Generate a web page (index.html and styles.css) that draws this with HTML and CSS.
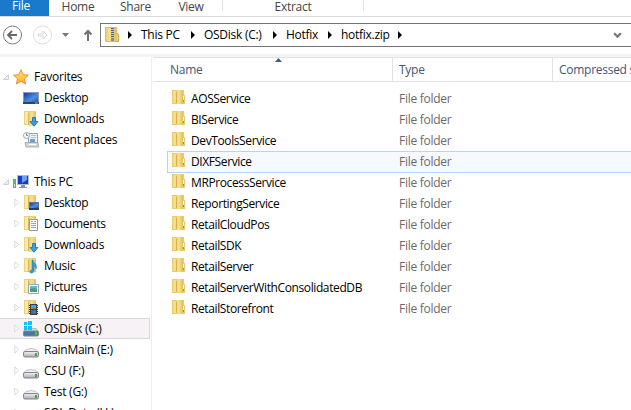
FILE: index.html
```
<!DOCTYPE html>
<html lang="en">
<head>
<meta charset="utf-8">
<title>hotfix.zip</title>
<link rel="stylesheet" href="styles.css">
</head>
<body>
<svg class="defs" aria-hidden="true">
  <defs>
    <linearGradient id="gold"><stop offset="0" stop-color="#e9cf73"/><stop offset=".4" stop-color="#f5e294"/><stop offset="1" stop-color="#e2be55"/></linearGradient>
    <linearGradient id="screen" x2="1" y2="1"><stop offset="0" stop-color="#153f9b"/><stop offset=".6" stop-color="#4d8fe2"/><stop offset="1" stop-color="#2455b5"/></linearGradient>
    <linearGradient id="metal" x2="0" y2="1"><stop offset="0" stop-color="#f5f5f7"/><stop offset="1" stop-color="#a9a8b1"/></linearGradient>
    <linearGradient id="starfill" x2="0" y2="1"><stop offset="0" stop-color="#ffe879"/><stop offset="1" stop-color="#ffad20"/></linearGradient>
    <symbol id="folder" viewBox="0 0 16 16">
      <path d="M1 1h12v14H1z" fill="#e8cb6c"/><path d="M2 2h3v12H2z" fill="#f3dd8b"/>
      <path d="M5 2l2-1h5v14H7l-2-1z" fill="url(#gold)"/><path d="M5 3h1v11H5z" fill="#d5b24b"/>
      <path d="M12 6h2v9h-2z" fill="#e6c973"/><path d="M12 7h1v5h-1z" fill="#fff"/><path d="M12 11h1v2h-1z" fill="#36a4d9"/>
    </symbol>
    <symbol id="base" viewBox="0 0 16 16">
      <path d="M1 0h12v14H1z" fill="#ecd17d"/><path d="M2 1h3v12H2z" fill="#f9eaaa"/>
      <path d="M6 2l2-1h5v13l-5 1.500-2-1z" fill="url(#gold)"/><path d="M5 2h1v12H5z" fill="#d8b75a"/>
    </symbol>
    <symbol id="down" viewBox="0 0 16 16">
      <use href="#base"/><path d="M9.500 6.500h3v4H15l-4 4.700-4-4.700h2.500z" fill="#35a1ed" stroke="#176cb5" stroke-width=".8"/>
    </symbol>
    <symbol id="desktop" viewBox="0 0 16 16">
      <path d="M0 2h16v12H0z" fill="#8d9cae"/><path d="M1 3h14v9H1z" fill="url(#screen)"/><path d="M0 12h16v2H0z" fill="#35445b"/><path d="M12 12.500h3v1h-3z" fill="#91b2ce"/>
    </symbol>
    <symbol id="deskfolder" viewBox="0 0 16 16">
      <use href="#base"/><path d="M6 7h10v8H6z" fill="#60758d"/><path d="M7 8h8v5H7z" fill="url(#screen)"/><path d="M6 13h10v2H6z" fill="#283d59"/>
    </symbol>
    <symbol id="docs" viewBox="0 0 16 16">
      <use href="#base"/><path d="M6.500 3.500h8v11h-8z" fill="#fff" stroke="#919ba7"/><path d="M8 5.500h2m1 0h2M8 7.500h5M8 9.500h5M8 11.500h5" fill="none" stroke="#8fa4bd"/>
    </symbol>
    <symbol id="music" viewBox="0 0 16 16">
      <use href="#base"/><path d="M10 2c0 3 5 4 3 9 0-3-2-3-2-3v5c-1 3-5 2-4 0 .5-1 2-1 2-1V2z" fill="#299de5" stroke="#1872b4" stroke-width=".5"/>
    </symbol>
    <symbol id="pics" viewBox="0 0 16 16">
      <use href="#base"/><path d="M5.500 5.500h10v9h-10z" fill="#fff" stroke="#9aa6ac"/><path d="M7 7h7v3H7z" fill="#65b3df"/><path d="M7 10l4-1 3 1v3H7z" fill="#4d9c74"/>
    </symbol>
    <symbol id="video" viewBox="0 0 16 16">
      <use href="#base"/><path d="M6 4h9v11H6z" fill="#363f48"/><path d="M8 5h5v4H8z" fill="#4aa4df"/><path d="M8 10h5v4H8z" fill="#326f9e"/><path d="M10 7l3 2H9zM9 12l3-1 1 2z" fill="#b66c30"/><path d="M6.500 4v11M14.500 4v11" fill="none" stroke="#ddd" stroke-dasharray="1 1"/>
    </symbol>
    <symbol id="drive" viewBox="0 0 16 16">
      <path d="M3 6.500q5-2 10 0l2 2v4H1v-4z" fill="#f0f0f2" stroke="#b8b7bc" stroke-width=".8"/><rect x=".5" y="8.500" width="15" height="5.500" rx="1.500" fill="url(#metal)" stroke="#85848c"/><path d="M12 10h2v3h-2z" fill="#42a637"/>
    </symbol>
    <symbol id="osdrive" viewBox="0 0 16 16">
      <path d="M3 7.500h10l2 3H1z" fill="#d7dce0" stroke="#9ba4ab" stroke-width=".7"/><rect x=".5" y="10" width="15" height="5" rx="1.200" fill="#427d96" stroke="#7b8b94"/><path d="M12 11h2v3h-2z" fill="#52c44a"/>
      <path d="M1 1h3v3H1zM5 0h4v4H5zM1 5h3v4H1zM5 5h4v4H5z" fill="#11c4f4"/>
    </symbol>
    <symbol id="pc" viewBox="0 0 16 16">
      <path d="M4 1h12v10H4z" fill="#b4b9c2"/><path d="M5 2h10v8H5z" fill="#173fbd"/><path d="M9 2h5v4l-5 3z" fill="#6ba1ee"/><path d="M8 11h4v2h2v1H6v-1h2z" fill="#8d949d"/><path d="M0 5h3v9H0z" fill="#8b9296"/><path d="M1 6h1v3H1z" fill="#45d645"/><path d="M1 10h1v3H1z" fill="#ddd"/>
    </symbol>
    <symbol id="recent" viewBox="0 0 16 16">
      <path d="M5.500 1.500h9v9h-9z" fill="#eef3f6" stroke="#9ba4aa"/><path d="M8 3.500h5M8 5.500h5" fill="none" stroke="#b5c0c8"/><path d="M7 7h5v3H7z" fill="#58a9d5"/><path d="M2 10.500h13l.5 4.500H3z" fill="#d4d8db" stroke="#969da3" stroke-width=".8"/><path d="M6 12.500h7" fill="none" stroke="#fff"/><circle cx="3.500" cy="3.500" r="3" fill="#f7f9fb" stroke="#9aa5ad"/><path d="M3.500 1.500v2H5" fill="none" stroke="#526675" stroke-width=".8"/>
    </symbol>
    <symbol id="star" viewBox="0 0 16 16"><path d="M8 .7l2.200 5 5.200.5-4 3.600 1.300 5.200L8 12.300 3.300 15l1.300-5.200-4-3.600 5.200-.5z" fill="url(#starfill)" stroke="#e88532" stroke-width=".9"/></symbol>
    <symbol id="zip" viewBox="0 0 16 16">
      <path d="M.5 .5h11v14H.5z" fill="url(#gold)" stroke="#dfbd58"/><path d="M11.500 6.500q3-1 2 8h-2" fill="#f2d679" stroke="#c59d40"/><path d="M7.500 1v10" fill="none" stroke="#b9c6d6" stroke-width="3"/><path d="M7.500 1v10" fill="none" stroke="#4b678e" stroke-width="3" stroke-dasharray="1 1"/><path d="M6 11h3v3H6z" fill="#8c8c8c"/>
    </symbol>
    <symbol id="closed" viewBox="0 0 6 9"><path d="M.8 1l4 3.500-4 3.500z" fill="#fff" stroke="#dcdcdc"/></symbol>
    <symbol id="open" viewBox="0 0 6 6"><path d="M.5 5.500h5v-5z" fill="#eee" stroke="#d0d0d0"/></symbol>
    <symbol id="crumb" viewBox="0 0 4 8"><path d="M0 0l4 4-4 4z" fill="#000"/></symbol>
  </defs>
</svg>
<nav class="tabs"><span class="file">File</span><span class="home">Home</span><span class="share">Share</span><span class="view">View</span><span class="extract">Extract</span></nav>
<div class="address">
  <svg class="nav" viewBox="0 0 100 36">
    <circle cx="12.500" cy="18" r="9" fill="none" stroke="#7c7c7c"/><path d="M17 18H8.500M12 14l-4 4 4 4" fill="none" stroke="#686868" stroke-width="1.800"/>
    <circle cx="42.500" cy="18" r="9" fill="none" stroke="#ddd"/><path d="M38 17h5v-3l4 4-4 4v-3h-5z" fill="none" stroke="#d4d4d4"/>
    <path d="M62 16h7l-3.500 4z" fill="#777"/><path d="M88 24V14M84.500 17.500L88 14l3.500 3.500" fill="none" stroke="#707070" stroke-width="2"/>
  </svg>
  <div class="path">
    <svg class="zip"><use href="#zip"/></svg><svg class="crumb"><use href="#crumb"/></svg><span class="c1">This PC</span><svg class="crumb"><use href="#crumb"/></svg><span class="c2">OSDisk (C:)</span><svg class="crumb"><use href="#crumb"/></svg><span class="c3">Hotfix</span><svg class="crumb"><use href="#crumb"/></svg><span class="c4">hotfix.zip</span><svg class="crumb"><use href="#crumb"/></svg>
    <svg class="drop" viewBox="0 0 8 6"><path d="M1 1l3 3 3-3" fill="none" stroke="#777" stroke-width="2"/></svg>
  </div>
</div>
<main>
  <aside>
    <div class="item root"><svg class="tw"><use href="#open"/></svg><svg class="ico"><use href="#star"/></svg><span>Favorites</span></div>
    <div class="item"><i class="tw"></i><svg class="ico"><use href="#desktop"/></svg><span>Desktop</span></div>
    <div class="item"><i class="tw"></i><svg class="ico"><use href="#down"/></svg><span>Downloads</span></div>
    <div class="item"><i class="tw"></i><svg class="ico"><use href="#recent"/></svg><span>Recent places</span></div>
    <div class="item"></div>
    <div class="item root"><svg class="tw"><use href="#open"/></svg><svg class="ico"><use href="#pc"/></svg><span>This PC</span></div>
    <div class="item"><svg class="tw"><use href="#closed"/></svg><svg class="ico"><use href="#deskfolder"/></svg><span>Desktop</span></div>
    <div class="item"><svg class="tw"><use href="#closed"/></svg><svg class="ico"><use href="#docs"/></svg><span>Documents</span></div>
    <div class="item"><svg class="tw"><use href="#closed"/></svg><svg class="ico"><use href="#down"/></svg><span>Downloads</span></div>
    <div class="item"><svg class="tw"><use href="#closed"/></svg><svg class="ico"><use href="#music"/></svg><span>Music</span></div>
    <div class="item"><svg class="tw"><use href="#closed"/></svg><svg class="ico"><use href="#pics"/></svg><span>Pictures</span></div>
    <div class="item"><svg class="tw"><use href="#closed"/></svg><svg class="ico"><use href="#video"/></svg><span>Videos</span></div>
    <div class="item active"><svg class="tw"><use href="#closed"/></svg><svg class="ico"><use href="#osdrive"/></svg><span>OSDisk (C:)</span></div>
    <div class="item"><svg class="tw"><use href="#closed"/></svg><svg class="ico disk"><use href="#drive"/></svg><span>RainMain (E:)</span></div>
    <div class="item"><svg class="tw"><use href="#closed"/></svg><svg class="ico disk"><use href="#drive"/></svg><span>CSU (F:)</span></div>
    <div class="item"><svg class="tw"><use href="#closed"/></svg><svg class="ico disk"><use href="#drive"/></svg><span>Test (G:)</span></div>
    <div class="item"><svg class="tw"><use href="#closed"/></svg><svg class="ico disk"><use href="#drive"/></svg><span>SQL Data (H:)</span></div>
  </aside>
  <section>
    <header><div class="name">Name<svg class="sort" viewBox="0 0 7 4"><path d="M0 4l3.500-4L7 4z" fill="#3f5f80"/></svg></div><div class="type">Type</div><div class="size">Compressed size</div></header>
    <div class="rows">
      <div class="row"><svg class="ico"><use href="#folder"/></svg><span class="fn">AOSService</span><span class="ft">File folder</span></div>
      <div class="row"><svg class="ico"><use href="#folder"/></svg><span class="fn">BIService</span><span class="ft">File folder</span></div>
      <div class="row"><svg class="ico"><use href="#folder"/></svg><span class="fn">DevToolsService</span><span class="ft">File folder</span></div>
      <div class="row hover"><svg class="ico"><use href="#folder"/></svg><span class="fn">DIXFService</span><span class="ft">File folder</span></div>
      <div class="row"><svg class="ico"><use href="#folder"/></svg><span class="fn">MRProcessService</span><span class="ft">File folder</span></div>
      <div class="row"><svg class="ico"><use href="#folder"/></svg><span class="fn">ReportingService</span><span class="ft">File folder</span></div>
      <div class="row"><svg class="ico"><use href="#folder"/></svg><span class="fn">RetailCloudPos</span><span class="ft">File folder</span></div>
      <div class="row"><svg class="ico"><use href="#folder"/></svg><span class="fn">RetailSDK</span><span class="ft">File folder</span></div>
      <div class="row"><svg class="ico"><use href="#folder"/></svg><span class="fn">RetailServer</span><span class="ft">File folder</span></div>
      <div class="row"><svg class="ico"><use href="#folder"/></svg><span class="fn">RetailServerWithConsolidatedDB</span><span class="ft">File folder</span></div>
      <div class="row"><svg class="ico"><use href="#folder"/></svg><span class="fn">RetailStorefront</span><span class="ft">File folder</span></div>
    </div>
  </section>
</main>
</body>
</html>
```
FILE: styles.css
```
* { box-sizing: border-box; }
body { margin: 0; width: 631px; height: 410px; overflow: hidden; background: #fff; color: #000; font: 12px/20px "Open Sans", "Noto Sans", sans-serif; letter-spacing: -.27px; white-space: nowrap; }
svg { display: block; flex: none; }
.defs { position: absolute; width: 0; height: 0; }
.tabs { display: grid; grid-template-columns: 49px 58px 57px 59px 141px 1fr; height: 17px; border-bottom: 1px solid #dadada; color: #444; line-height: 13px; text-align: center; }
.tabs > * { height: 16px; }
.tabs .file { background: #1979ca; color: #fff; padding-right: 7px; line-height: 12px; }
.view { border-right: 1px solid #e3e3e3; padding-right: 4px; }
.tabs .view, .tabs .extract { height: 11px; }
.extract { border-right: 1px solid #e3e3e3; }
.address { display: flex; height: 37px; }
.nav { width: 100px; height: 36px; }
.path { display: flex; align-items: center; width: 540px; height: 24px; margin-top: 6px; border: 1px solid #747474; padding-left: 4px; flex: none; }
.zip { width: 16px; height: 16px; }
.crumb { width: 4px; height: 8px; }
.zip + .crumb { margin-left: 7px; }
.path span { margin-left: 9px; }
.c1 { width: 50px; } .c2 { width: 69px; } .c3 { width: 42px; } .c4 { width: 57px; }
.drop { width: 9px; height: 7px; margin-left: 211px; }
main { display: flex; height: 356px; border-top: 3px solid #f5f3f4; }
aside { width: 152px; border-right: 1px solid #eee; padding-top: 9px; flex: none; }
.item { display: flex; align-items: center; height: 21px; width: 150px; padding-left: 14px; }
.item.root { padding-left: 3px; }
.item.active { background: #f6f2f6; box-shadow: inset 0 1px #dad6da, inset 0 -1px #dad6da, inset -1px 0 #dad6da; }
.tw { width: 6px; height: 9px; flex: none; }
.root .tw { height: 6px; }
.item .ico { margin-left: 3px; }
.root .ico { margin-left: 4px; }
.ico { width: 16px; height: 16px; }
.item span { margin-left: 5px; }
.disk { margin-top: 3px; }
section { margin-left: 1px; flex: 1; min-width: 0; overflow: hidden; }
header { display: grid; grid-template-columns: 240px 160px 1fr; height: 25px; border: 1px solid #e3e1e5; border-width: 1px 0; color: #3f5674; line-height: 24px; }
header div { position: relative; border-right: 1px solid #e3e1e5; padding-left: 6px; }
header .name { padding-left: 17px; }
.sort { position: absolute; left: 122px; top: 0; width: 7px; height: 4px; }
.rows { padding: 6px 0 0 14px; }
.row { display: flex; align-items: center; height: 21px; padding-left: 4px; }
.row .ico { margin-top: -3px; }
.row.hover { background: #f6faff; box-shadow: inset 1px 1px #b8d4f5, 0 1px #b8d4f5; }
.fn { width: 208px; margin-left: 4px; flex: none; letter-spacing: -.39px; }
.ft { color: #6a6a6a; }
```
